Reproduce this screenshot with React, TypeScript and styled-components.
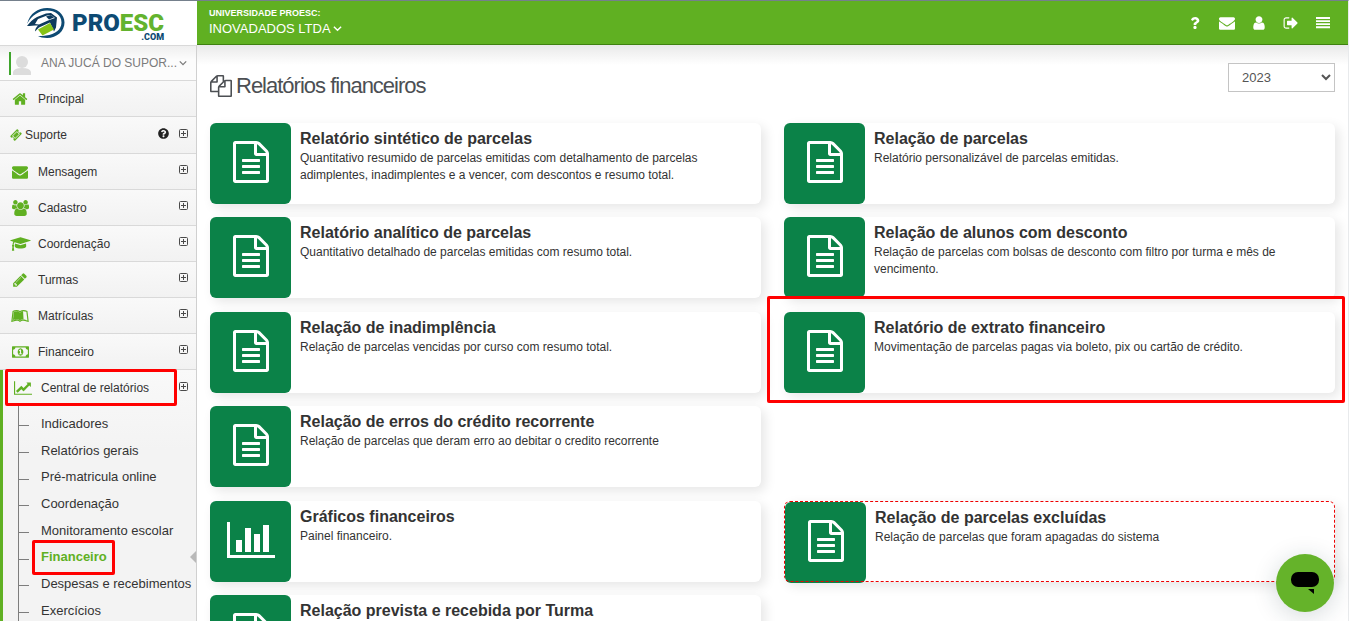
import React from "react";
import styled, { createGlobalStyle, css } from "styled-components";
import { FaLeanpub, FaQuestion, FaQuestionCircle } from "react-icons/fa";

const Global = createGlobalStyle`
  *, *::before, *::after { box-sizing: border-box; }
  body {
    margin: 0;
    color: #333;
    background: #fff;
    font: 13px/20px "Liberation Sans", Arial, sans-serif;
  }
  button, select { font: inherit; color: inherit; }
  button { border: 0; padding: 0; background: none; cursor: pointer; }
  a { color: inherit; text-decoration: none; }
  ul { list-style: none; margin: 0; padding: 0; }
  svg { display: block; }
`;

const green = "#60b022";

/* ---------- icons ---------- */

const glyphs = {
  file: [1792, "M1596 380q28 28 48 76t20 88v1152q0 40-28 68t-68 28h-1344q-40 0-68-28t-28-68v-1600q0-40 28-68t68-28h896q40 0 88 20t76 48zm-444-244v376h376q-10-29-22-41l-313-313q-12-12-41-22zm384 1528v-1024h-416q-40 0-68-28t-28-68v-416h-768v1536h1280zm-1024-864q0-14 9-23t23-9h704q14 0 23 9t9 23v64q0 14-9 23t-23 9h-704q-14 0-23-9t-9-23v-64zm736 224q14 0 23 9t9 23v64q0 14-9 23t-23 9h-704q-14 0-23-9t-9-23v-64q0-14 9-23t23-9h704zm0 256q14 0 23 9t9 23v64q0 14-9 23t-23 9h-704q-14 0-23-9t-9-23v-64q0-14 9-23t23-9h704z"],
  bars: [2048, "M640 896v512h-256v-512h256zm384-512v1024h-256v-1024h256zm1024 1152v128h-2048v-1536h128v1408h1920zm-640-896v768h-256v-768h256zm384-384v1152h-256v-1152h256z"],
  copies: [1792, "M1696 384q40 0 68 28t28 68v1216q0 40-28 68t-68 28h-960q-40 0-68-28t-28-68v-288h-544q-40 0-68-28t-28-68v-672q0-40 20-88t48-76l408-408q28-28 76-48t88-20h416q40 0 68 28t28 68v328q68-40 128-40h416zm-544 213l-299 299h299v-299zm-640-384l-299 299h299v-299zm196 647l316-316v-416h-384v416q0 40-28 68t-68 28h-416v640h512v-256q0-40 20-88t48-76zm956 804v-1152h-384v416q0 40-28 68t-68 28h-416v640h896z"],
  home: [1792, "M1472 992v480q0 26-19 45t-45 19h-384v-384h-256v384h-384q-26 0-45-19t-19-45v-480q0-1 .5-3t.5-3l575-474 575 474q1 2 1 6zm223-69l-62 74q-8 9-21 11h-3q-13 0-21-7l-692-577-692 577q-12 8-24 7-13-2-21-11l-62-74q-8-10-7-23.5t11-21.5l719-599q32-26 76-26t76 26l244 204v-195q0-14 9-23t23-9h192q14 0 23 9t9 23v408l219 182q10 8 11 21.5t-7 23.5z"],
  envelope: [1792, "M1792 710v794q0 66-47 113t-113 47h-1472q-66 0-113-47t-47-113v-794q44 49 101 87 362 246 497 345 57 42 92.5 65.5t94.5 48 110 24.5h2q51 0 110-24.5t94.5-48 92.5-65.5q170-123 498-345 57-39 100-87zm0-294q0 79-49 151t-122 123q-376 261-468 325-10 7-42.5 31t-54 38.5-52 32.5-57.5 27-50 9h-2q-23 0-50-9t-57.5-27-52-32.5-54-38.5-42.5-31q-91-64-262-182.5t-205-142.5q-62-42-117-115.5t-55-136.5q0-78 41.5-130t118.5-52h1472q65 0 112.5 47t47.5 113z"],
  user: [1792, "M1536 1399q0 109-62.5 187t-150.5 78h-854q-88 0-150.5-78t-62.5-187q0-85 8.5-160.5t31.5-152 58.5-131 94-89 134.5-34.5q131 128 313 128t313-128q76 0 134.5 34.5t94 89 58.5 131 31.5 152 8.5 160.5zm-256-887q0 159-112.5 271.5t-271.5 112.5-271.5-112.5-112.5-271.5 112.5-271.5 271.5-112.5 271.5 112.5 112.5 271.5z"],
  signOut: [1792, "M704 1440q0 4 1 20t.5 26.5-3 23.5-10 19.5-20.5 6.5h-320q-119 0-203.5-84.5t-84.5-203.5v-704q0-119 84.5-203.5t203.5-84.5h320q13 0 22.5 9.5t9.5 22.5q0 4 1 20t.5 26.5-3 23.5-10 19.5-20.5 6.5h-320q-66 0-113 47t-47 113v704q0 66 47 113t113 47h312l11.5 1 11.5 3 8 5.5 7 9 2 13.5zm928-544q0 26-19 45l-544 544q-19 19-45 19t-45-19-19-45v-288h-448q-26 0-45-19t-19-45v-384q0-26 19-45t45-19h448v-288q0-26 19-45t45-19 45 19l544 544q19 19 19 45z"],
  lineChart: [2048, "M2048 1536v128h-2048v-1536h128v1408h1920zm-128-1248v435q0 21-19.5 29.5t-35.5-7.5l-121-121-633 633q-10 10-23 10t-23-10l-233-233-416 416-192-192 585-585q10-10 23-10t23 10l233 233 464-464-121-121q-16-16-7.5-35.5t29.5-19.5h435q14 0 23 9t9 23z"],
  money: [1920, "M768 1152h384v-96h-128v-448h-114l-148 137 77 80q42-37 55-57h2v288h-128v96zm512-256q0 70-21 142t-59.5 134-101.5 101-138 39-138-39-101.5-101-59.5-134-21-142 21-142 59.5-134 101.5-101 138-39 138 39 101.5 101 59.5 134 21 142zm512 256v-512q-106 0-181-75t-75-181h-1152q0 106-75 181t-181 75v512q106 0 181 75t75 181h1152q0-106 75-181t181-75zm128-832v1152q0 26-19 45t-45 19h-1792q-26 0-45-19t-19-45v-1152q0-26 19-45t45-19h1792q26 0 45 19t19 45z"],
  pencil: [1792, "M491 1536l91-91-235-235-91 91v107h128v128h107zm523-928q0-22-22-22-10 0-17 7l-542 542q-7 7-7 17 0 22 22 22 10 0 17-7l542-542q7-7 7-17zm-54-192l416 416-832 832h-416v-416zm683 96q0 53-37 90l-166 166-416-416 166-165q36-38 90-38 53 0 91 38l235 234q37 39 37 91z"],
  cap: [2304, "M1774 836l18 316q4 69-82 128t-235 93.5-323 34.5-323-34.5-235-93.5-82-128l18-316 574 181q22 7 48 7t48-7zm530-324q0 23-22 31l-1120 352q-4 1-10 1t-10-1l-652-206q-43 34-71 111.5t-34 178.5q63 36 63 109 0 69-58 107l58 433q2 14-8 25-9 11-24 11h-192q-15 0-24-11-10-11-8-25l58-433q-58-38-58-107 0-73 65-111 11-207 98-330l-333-104q-22-8-22-31t22-31l1120-352q4-1 10-1t10 1l1120 352q22 8 22 31z"],
  users: [1920, "M593 896q-162 5-265 128h-134q-82 0-138-40.5t-56-118.5q0-353 124-353 6 0 43.5 21t97.5 42.5 119 21.5q67 0 133-23-5 37-5 66 0 159 92 293zm1071 637q0 120-73 189.5t-194 69.5h-874q-121 0-194-69.5t-73-189.5q0-53 3.5-103.5t14-109 26.5-108.5 43-97.5 62-81 85.5-53.5 111.5-20q10 0 43 21.5t73 48 107 48 135 21.5 135-21.5 107-48 73-48 43-21.5q61 0 111.5 20t85.5 53.5 62 81 43 97.5 26.5 108.5 14 109 3.5 103.5zm-1024-1277q0 106-75 181t-181 75-181-75-75-181 75-181 181-75 181 75 75 181zm704 384q0 159-112.5 271.5t-271.5 112.5-271.5-112.5-112.5-271.5 112.5-271.5 271.5-112.5 271.5 112.5 112.5 271.5zm576 225q0 78-56 118.5t-138 40.5h-134q-103-123-265-128 92-134 92-293 0-29-5-66 66 23 133 23 59 0 119-21.5t97.5-42.5 43.5-21q124 0 124 353zm-128-609q0 106-75 181t-181 75-181-75-75-181 75-181 181-75 181 75 75 181z"],
  ticket: [1792, "M1024 452l316 316-572 572-316-316zm-211 979l618-618q19-19 19-45t-19-45l-362-362q-18-18-45-18t-45 18l-618 618q-19 19-19 45t19 45l362 362q18 18 45 18t45-18zm889-637l-907 908q-37 37-90.5 37t-90.5-37l-126-125q56-56 56-136t-56-136-136-56-136 56l-125-126q-37-37-37-90.5t37-90.5l907-906q37-37 90.5-37t90.5 37l125 125q-56 56-56 136t56 136 136 56 136-56l126 125q37 37 37 90.5t-37 90.5z"],
  menu: [1792, "M0 128h1792v256h-1792zM0 554h1792v200h-1792zM0 938h1792v200h-1792zM0 1322h1792v256h-1792z"],
} as const;

type GlyphName = keyof typeof glyphs;

const Glyph = ({ name, size }: { name: GlyphName; size: number }) => {
  const [width, d] = glyphs[name];
  return (
    <svg
      viewBox={`0 0 ${width} 1792`}
      width={Math.round((size * width) / 1792)}
      height={size}
      fill="currentColor"
      aria-hidden="true"
    >
      <path d={d} />
    </svg>
  );
};

const Chevron = ({ size }: { size: number }) => (
  <svg viewBox="0 0 10 10" width={size} height={size} fill="none" stroke="currentColor" strokeWidth="1.6" aria-hidden="true">
    <path d="M1 3l4 4 4-4" />
  </svg>
);

const PlusBox = () => (
  <svg viewBox="0 0 9 9" width="9" height="9" fill="none" stroke="#4a4a4a" aria-hidden="true">
    <rect x=".5" y=".5" width="8" height="8" rx="1" />
    <path d="M2 4.5h5M4.5 2v5" />
  </svg>
);

/* ---------- page frame ---------- */

const Page = styled.div`
  display: flex;
  flex-direction: column;
  height: 100vh;
  overflow: hidden;
  border-top: 1px solid #75808c;
  border-right: 1px solid #e8eaec;
`;

const Header = styled.header`
  display: flex;
  flex: none;
  height: 44px;
`;

const Columns = styled.div`
  display: flex;
  flex: 1;
  min-height: 0;
`;

const Brand = styled.a`
  display: flex;
  align-items: center;
  flex: none;
  gap: 6px;
  width: 197px;
  padding-left: 26px;
`;

const BrandText = styled.span`
  display: flex;
  flex-direction: column;
  align-items: flex-end;
  padding-top: 8px;
  font-family: Roboto, sans-serif;
  font-weight: 900;
  color: #0d4a73;
`;

const BrandName = styled.span`
  font-size: 24px;
  line-height: 20px;
  em { font-style: normal; color: #63b32e; }
`;

const BrandSuffix = styled.span`
  font-size: 9px;
  line-height: 8px;
`;

const TopBar = styled.div`
  display: flex;
  flex: 1;
  align-items: center;
  justify-content: space-between;
  padding: 0 15px 0 12px;
  border-bottom: 1px solid #3f8110;
  background: ${green};
  color: #fff;
`;

const School = styled.div`
  display: flex;
  flex-direction: column;
  align-items: flex-start;
`;

const SchoolLabel = styled.span`
  font-size: 9px;
  font-weight: 700;
  line-height: 12px;
`;

const SchoolButton = styled.button`
  display: flex;
  align-items: center;
  gap: 2px;
  font-size: 13px;
  line-height: 19px;
`;

const Tools = styled.nav`
  display: flex;
  gap: 12px;
`;

const Tool = styled.button`
  display: grid;
  place-items: center;
  width: 20px;
  height: 20px;
`;

/* ---------- sidebar ---------- */

const Sidebar = styled.aside`
  flex: none;
  width: 197px;
  border-right: 1px solid #d0d0d0;
  background: #f4f4f4;
`;

const UserButton = styled.button`
  display: flex;
  align-items: center;
  width: 100%;
  height: 36px;
  padding: 0 9px;
  border: 1px solid #d9d9d9;
  border-width: 1px 0;
  background: linear-gradient(#efefef, #fcfcfc 40%);
  color: #7b7b7b;
  font-size: 12px;
`;

const Avatar = styled.span`
  width: 23px;
  height: 23px;
  border-left: 2px solid #3fa52c;
  color: #dcdcdc;
`;

const UserName = styled.span`
  flex: 1;
  padding-left: 9px;
  text-align: left;
  white-space: nowrap;
`;

const MenuItem = styled.li<{ $tall?: boolean }>`
  display: flex;
  align-items: center;
  height: ${(p) => (p.$tall ? 37 : 36)}px;
  padding-right: 8px;
  border-bottom: 1px solid #d9d9d9;
  background: linear-gradient(#f9f9f9, #f2f2f2);
`;

const MenuLink = styled.a<{ $small?: boolean }>`
  display: flex;
  flex: 1;
  align-items: center;
  gap: ${(p) => (p.$small ? 3 : 8)}px;
  padding-left: 10px;
  font-size: 12px;
`;

const IconSlot = styled.span<{ $small?: boolean }>`
  display: grid;
  place-items: center;
  width: ${(p) => (p.$small ? 12 : 20)}px;
  color: ${green};
`;

const Expand = styled.button`
  display: grid;
  place-items: center;
  height: 20px;
  margin-bottom: 4px;
`;

const Help = styled.button`
  margin: 0 10px 4px 0;
  color: #222;
  font-size: 11px;
`;

const OpenGroup = styled.li`
  border-left: 3px solid ${green};
  background: linear-gradient(#f9f9f9, #f3f3f3 80px);
`;

const OpenHead = styled.div`
  position: relative;
  display: flex;
  align-items: center;
  height: 36px;
  padding-right: 8px;
`;

const SubList = styled.ul`
  margin-left: 15px;
  padding-top: 4px;
  border-left: 1px solid #7d7d7d;
`;

const SubItem = styled.li<{ $active?: boolean }>`
  position: relative;
  display: flex;
  align-items: center;
  height: 27px;
  &:nth-child(3n) { height: 26px; }
  &::before {
    content: "";
    width: 10px;
    height: 1px;
    margin-top: 4px;
    background: #7d7d7d;
  }
  a { padding-left: 12px; font-size: 13px; }
  ${(p) => p.$active && css`
    color: ${green};
    font-weight: 700;
    &::after {
      content: "";
      margin-left: auto;
      border: 6px solid transparent;
      border-left: 0;
      border-right-color: #b9b9b9;
    }
  `}
`;

const Mark = styled.span<{ $inset: string }>`
  position: absolute;
  inset: ${(p) => p.$inset};
  z-index: 2;
  border: 3px solid #f00;
  border-radius: 2px;
  pointer-events: none;
`;

/* ---------- main area ---------- */

const Main = styled.main`
  flex: 1;
  min-width: 0;
  padding: 18px 13px 0;
  background: linear-gradient(#e9e9e9, #fff 20px);
`;

const TitleRow = styled.div`
  display: flex;
  align-items: flex-start;
  justify-content: space-between;
  height: 60px;
`;

const Title = styled.h1`
  display: flex;
  align-items: center;
  gap: 4px;
  margin: 9px 0 0;
  color: #4c4f53;
  font-size: 22px;
  font-weight: 400;
  line-height: 28px;
  letter-spacing: -1px;
`;

const YearSelect = styled.select`
  width: 107px;
  height: 29px;
  padding: 0 0 0 9px;
  border: 1px solid #c4c4c4;
  border-radius: 0;
  background: #fff;
  color: #555;
`;

const Cards = styled.div`
  display: grid;
  grid-template-columns: 1fr 1fr;
  grid-auto-rows: 94px 95px;
  column-gap: 23px;
  align-items: start;
`;

const Slot = styled.div`
  position: relative;
`;

const Card = styled.a<{ $removed?: boolean }>`
  display: flex;
  gap: 9px;
  height: 81px;
  border-radius: 6px;
  background: #fff;
  box-shadow: 4px 4px 12px rgba(0, 0, 0, 0.1);
  ${(p) => p.$removed && css`
    outline: 1px dashed #e00;
    outline-offset: -1px;
    padding: 1px 0 0 1px;
  `}
`;

const CardIcon = styled.span`
  display: grid;
  flex: none;
  place-items: center;
  width: 81px;
  height: 81px;
  padding-bottom: 3px;
  border-radius: 6px;
  background: #0b8248;
  color: #fff;
`;

const CardTitle = styled.h2`
  margin: 6px 0 0;
  font-size: 16px;
  line-height: 20px;
`;

const CardText = styled.p`
  max-width: 410px;
  margin: 1px 0 0;
  font-size: 12px;
  line-height: 17px;
`;

const ChatButton = styled.button`
  position: fixed;
  right: 15px;
  bottom: 9px;
  z-index: 3;
  display: grid;
  place-items: center;
  width: 58px;
  height: 58px;
  border-radius: 50%;
  background: #65b32a;
  box-shadow: 0 4px 24px rgba(20, 50, 60, 0.18);
`;

/* ---------- content ---------- */

type Entry = { label: string; icon: React.ReactNode; plain?: boolean; help?: boolean };

const menu: Entry[] = [
  { label: "Principal", icon: <Glyph name="home" size={16} />, plain: true },
  { label: "Suporte", icon: <Glyph name="ticket" size={12} />, help: true },
  { label: "Mensagem", icon: <Glyph name="envelope" size={16} /> },
  { label: "Cadastro", icon: <Glyph name="users" size={16} /> },
  { label: "Coordenação", icon: <Glyph name="cap" size={16} /> },
  { label: "Turmas", icon: <Glyph name="pencil" size={16} /> },
  { label: "Matrículas", icon: <FaLeanpub size={18} /> },
  { label: "Financeiro", icon: <Glyph name="money" size={16} /> },
];

const reports = [
  "Indicadores",
  "Relatórios gerais",
  "Pré-matricula online",
  "Coordenação",
  "Monitoramento escolar",
  "Financeiro",
  "Despesas e recebimentos",
  "Exercícios",
];

type CardData = { title: string; text: string; icon?: GlyphName; removed?: boolean; marked?: boolean };

const cards: (CardData | null)[] = [
  { title: "Relatório sintético de parcelas", text: "Quantitativo resumido de parcelas emitidas com detalhamento de parcelas adimplentes, inadimplentes e a vencer, com descontos e resumo total." },
  { title: "Relação de parcelas", text: "Relatório personalizável de parcelas emitidas." },
  { title: "Relatório analítico de parcelas", text: "Quantitativo detalhado de parcelas emitidas com resumo total." },
  { title: "Relação de alunos com desconto", text: "Relação de parcelas com bolsas de desconto com filtro por turma e mês de vencimento." },
  { title: "Relação de inadimplência", text: "Relação de parcelas vencidas por curso com resumo total." },
  { title: "Relatório de extrato financeiro", text: "Movimentação de parcelas pagas via boleto, pix ou cartão de crédito.", marked: true },
  { title: "Relação de erros do crédito recorrente", text: "Relação de parcelas que deram erro ao debitar o credito recorrente" },
  null,
  { title: "Gráficos financeiros", text: "Painel financeiro.", icon: "bars" },
  { title: "Relação de parcelas excluídas", text: "Relação de parcelas que foram apagadas do sistema", removed: true },
  { title: "Relação prevista e recebida por Turma", text: "" },
];

const LogoMark = () => (
  <svg viewBox="0 0 40 32" width="40" height="32" fill="none" aria-hidden="true">
    <path d="M1 17C4 6 12 1 21 1c10 0 17.500 6 17.500 14.500C38.500 24 31 31 21 31c-4 0-7-1-9-2 3 0 6 0 8-.5 9-1 15.500-6 15.500-13C35.500 8 29 3.500 21 3.500 13 3.500 6 8 1 17z" fill="#0d4a73" />
    <path d="M1 19c3-4 6-7 10-9l9-3.500 5-.5 6 4.500-1 10-2 4-4-9-11 5-4 4c0-2 1-4 3-6-4 0-8 .5-11 .5z" fill="#0d3a5c" />
    <path d="M12 12l9-3.500 4-.5 4 3-7 2.500-9 4-4-.5z" fill="#fff" />
    <path d="M20 9.500l5-1.500 3 2.500-5 2z" fill="#0d3a5c" />
    <path d="M12 22.500l12-6.500 4 6.500-11.500 6z" fill="#86c316" />
  </svg>
);

export default function App() {
  return (
    <Page>
      <Global />
      <Header>
        <Brand href="#" aria-label="PROESC.COM">
          <LogoMark />
          <BrandText>
            <BrandName>PRO<em>ESC</em></BrandName>
            <BrandSuffix>.COM</BrandSuffix>
          </BrandText>
        </Brand>
        <TopBar>
          <School>
            <SchoolLabel>UNIVERSIDADE PROESC:</SchoolLabel>
            <SchoolButton>INOVADADOS LTDA<Chevron size={9} /></SchoolButton>
          </School>
          <Tools>
            <Tool aria-label="Ajuda"><FaQuestion size={12} /></Tool>
            <Tool aria-label="Mensagens"><Glyph name="envelope" size={16} /></Tool>
            <Tool aria-label="Usuário"><Glyph name="user" size={16} /></Tool>
            <Tool aria-label="Sair"><Glyph name="signOut" size={16} /></Tool>
            <Tool aria-label="Menu"><Glyph name="menu" size={14} /></Tool>
          </Tools>
        </TopBar>
      </Header>
      <Columns>
        <Sidebar>
          <UserButton>
            <Avatar>
              <svg viewBox="0 0 21 23" width="21" height="23" fill="currentColor" aria-hidden="true">
                <circle cx="11" cy="10" r="6" />
                <path d="M2 23v-3q1-4 9-4t9 4v3z" />
              </svg>
            </Avatar>
            <UserName>ANA JUCÁ DO SUPOR...</UserName>
            <Chevron size={8} />
          </UserButton>
          <ul>
            {menu.map((m) => (
              <MenuItem key={m.label} $tall={m.help}>
                <MenuLink href="#" $small={m.help}>
                  <IconSlot $small={m.help}>{m.icon}</IconSlot>
                  {m.label}
                </MenuLink>
                {m.help && <Help aria-label="Ajuda"><FaQuestionCircle /></Help>}
                {!m.plain && <Expand aria-label={`Expandir ${m.label}`}><PlusBox /></Expand>}
              </MenuItem>
            ))}
            <OpenGroup>
              <OpenHead>
                <MenuLink href="#">
                  <IconSlot><Glyph name="lineChart" size={16} /></IconSlot>
                  Central de relatórios
                </MenuLink>
                <Expand aria-label="Recolher Central de relatórios"><PlusBox /></Expand>
                <Mark $inset="-1px 19px 0 2px" />
              </OpenHead>
              <SubList>
                {reports.map((r) => (
                  <SubItem key={r} $active={r === "Financeiro"}>
                    <a href="#">{r}</a>
                    {r === "Financeiro" && <Mark $inset="-4px 81px -5px 13px" />}
                  </SubItem>
                ))}
              </SubList>
            </OpenGroup>
          </ul>
        </Sidebar>
        <Main>
          <TitleRow>
            <Title><Glyph name="copies" size={22} />Relatórios financeiros</Title>
            <YearSelect aria-label="Ano" defaultValue="2023">
              <option>2023</option>
              <option>2022</option>
            </YearSelect>
          </TitleRow>
          <Cards>
            {cards.map((c, i) => (
              <Slot key={i}>
                {c && (
                  <Card href="#" $removed={c.removed}>
                    <CardIcon><Glyph name={c.icon ?? "file"} size={42} /></CardIcon>
                    <div>
                      <CardTitle>{c.title}</CardTitle>
                      <CardText>{c.text}</CardText>
                    </div>
                  </Card>
                )}
                {c?.marked && <Mark $inset="-16px -10px -10px -17px" />}
              </Slot>
            ))}
          </Cards>
        </Main>
      </Columns>
      <ChatButton aria-label="Abrir chat">
        <svg viewBox="0 0 30 24" width="30" height="24" aria-hidden="true">
          <rect x="1" y="1" width="28" height="15" rx="7" />
          <path d="M18 18h6v5z" />
        </svg>
      </ChatButton>
    </Page>
  );
}
